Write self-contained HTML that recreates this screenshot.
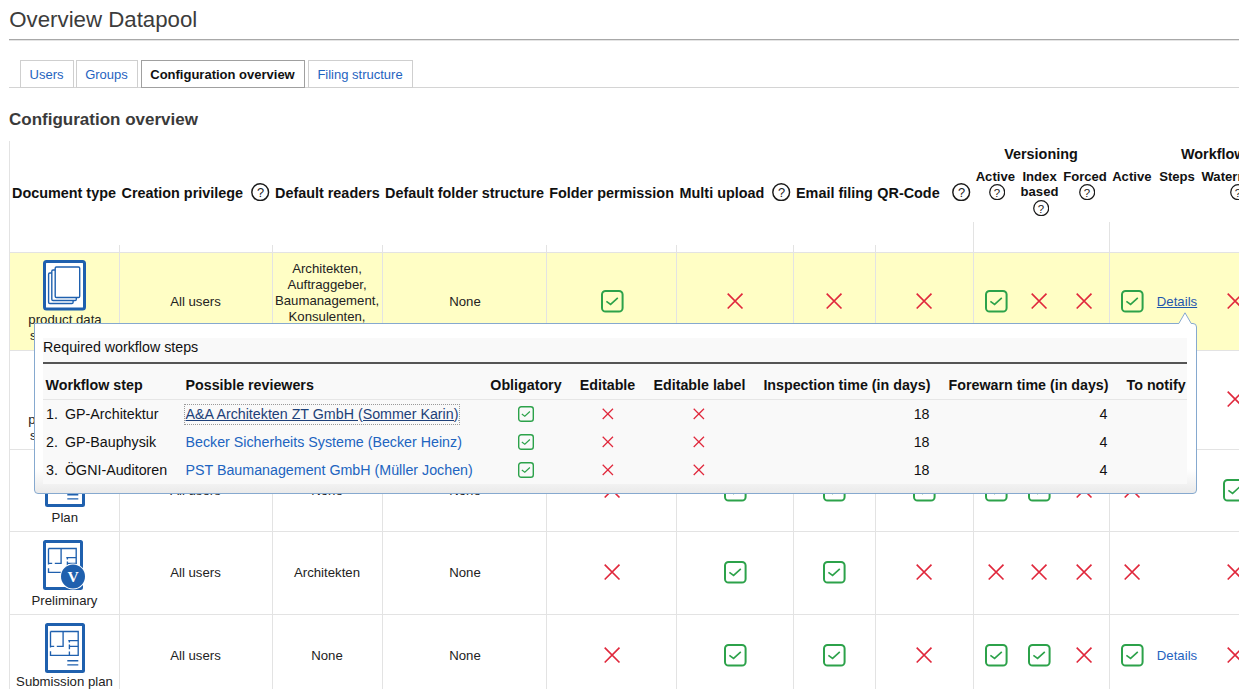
<!DOCTYPE html>
<html><head><meta charset="utf-8"><style>
html,body{margin:0;padding:0;background:#fff;}
body{width:1242px;height:689px;position:relative;overflow:hidden;font-family:"Liberation Sans", sans-serif;}
.t{position:absolute;white-space:nowrap;}
.r{position:absolute;}
#clip{position:absolute;left:0;top:0;width:1239px;height:689px;overflow:hidden;}
</style></head><body>
<div class="t" style="left:9.3px;top:6.50px;font-size:22.25px;line-height:26px;font-weight:normal;color:#3c3c3c;">Overview Datapool</div>
<div class="r" style="left:9px;top:39px;width:1230px;height:1px;background:#a8a8a8;"></div>
<div class="r" style="left:9px;top:40px;width:1230px;height:1px;background:#e4e4e4;"></div>
<div class="r" style="left:9px;top:87px;width:1230px;height:1px;background:#d4d4d4;"></div>
<div class="r" style="left:20px;top:60px;width:52px;height:26px;border:1px solid #cfcfcf;background:#fff"></div>
<div class="t" style="left:-103.5px;width:300px;text-align:center;top:67.00px;font-size:13px;line-height:15px;font-weight:normal;color:#1f63c0;">Users</div>
<div class="r" style="left:76px;top:60px;width:60px;height:26px;border:1px solid #cfcfcf;background:#fff"></div>
<div class="t" style="left:-43.5px;width:300px;text-align:center;top:67.00px;font-size:13px;line-height:15px;font-weight:normal;color:#1f63c0;">Groups</div>
<div class="r" style="left:141px;top:60px;width:162px;height:26px;border:1px solid #a0a0a0;background:#fff"></div>
<div class="t" style="left:72.5px;width:300px;text-align:center;top:67.00px;font-size:13px;line-height:15px;font-weight:bold;color:#111;">Configuration overview</div>
<div class="r" style="left:308px;top:60px;width:103px;height:26px;border:1px solid #cfcfcf;background:#fff"></div>
<div class="t" style="left:210.0px;width:300px;text-align:center;top:67.00px;font-size:13px;line-height:15px;font-weight:normal;color:#1f63c0;">Filing structure</div>
<div class="t" style="left:9px;top:109.80px;font-size:17px;line-height:20px;font-weight:bold;color:#3a3a3a;">Configuration overview</div>
<div id="clip">
<div class="r" style="left:10px;top:253px;width:1229px;height:97px;background:#fffec5;"></div>
<div class="r" style="left:10px;top:252px;width:1229px;height:1px;background:#e3e3e3;"></div>
<div class="r" style="left:10px;top:350px;width:1229px;height:1px;background:#e3e3e3;"></div>
<div class="r" style="left:10px;top:449px;width:1229px;height:1px;background:#e3e3e3;"></div>
<div class="r" style="left:10px;top:531px;width:1229px;height:1px;background:#e3e3e3;"></div>
<div class="r" style="left:10px;top:614px;width:1229px;height:1px;background:#e3e3e3;"></div>
<div class="r" style="left:9px;top:141px;width:1px;height:548px;background:#e3e3e3;"></div>
<div class="r" style="left:119px;top:245px;width:1px;height:444px;background:#e3e3e3;"></div>
<div class="r" style="left:272px;top:245px;width:1px;height:444px;background:#e3e3e3;"></div>
<div class="r" style="left:382px;top:245px;width:1px;height:444px;background:#e3e3e3;"></div>
<div class="r" style="left:546px;top:245px;width:1px;height:444px;background:#e3e3e3;"></div>
<div class="r" style="left:676px;top:245px;width:1px;height:444px;background:#e3e3e3;"></div>
<div class="r" style="left:793px;top:245px;width:1px;height:444px;background:#e3e3e3;"></div>
<div class="r" style="left:875px;top:245px;width:1px;height:444px;background:#e3e3e3;"></div>
<div class="r" style="left:973px;top:222px;width:1px;height:467px;background:#e3e3e3;"></div>
<div class="r" style="left:1109px;top:222px;width:1px;height:467px;background:#e3e3e3;"></div>
<div class="t" style="left:12px;top:184.90px;font-size:14.4px;line-height:17px;font-weight:bold;color:#111;">Document type</div>
<div class="t" style="left:121.5px;top:184.90px;font-size:14.4px;line-height:17px;font-weight:bold;color:#111;">Creation privilege</div>
<svg class="r" style="left:251.30px;top:182.80px" width="18.4" height="18.4" viewBox="0 0 18.4 18.4"><circle cx="9.2" cy="9.2" r="8.38" fill="none" stroke="#1a1a1a" stroke-width="1.45"/></svg>
<div class="t" style="left:250.5px;width:20px;text-align:center;top:185.44px;font-size:12.9px;line-height:15px;font-weight:normal;color:#222;">?</div>
<div class="t" style="left:275px;top:184.90px;font-size:14.4px;line-height:17px;font-weight:bold;color:#111;">Default readers</div>
<div class="t" style="left:385px;top:184.90px;font-size:14.4px;line-height:17px;font-weight:bold;color:#111;">Default folder structure</div>
<div class="t" style="left:549.2px;top:184.90px;font-size:14.4px;line-height:17px;font-weight:bold;color:#111;">Folder permission</div>
<div class="t" style="left:679.6px;top:184.90px;font-size:14.4px;line-height:17px;font-weight:bold;color:#111;">Multi upload</div>
<svg class="r" style="left:772.30px;top:182.80px" width="18.4" height="18.4" viewBox="0 0 18.4 18.4"><circle cx="9.2" cy="9.2" r="8.38" fill="none" stroke="#1a1a1a" stroke-width="1.45"/></svg>
<div class="t" style="left:771.5px;width:20px;text-align:center;top:185.44px;font-size:12.9px;line-height:15px;font-weight:normal;color:#222;">?</div>
<div class="t" style="left:796px;top:184.90px;font-size:14.4px;line-height:17px;font-weight:bold;color:#111;">Email filing</div>
<div class="t" style="left:877.3px;top:184.90px;font-size:14.4px;line-height:17px;font-weight:bold;color:#111;">QR-Code</div>
<svg class="r" style="left:952.30px;top:182.80px" width="18.4" height="18.4" viewBox="0 0 18.4 18.4"><circle cx="9.2" cy="9.2" r="8.38" fill="none" stroke="#1a1a1a" stroke-width="1.45"/></svg>
<div class="t" style="left:951.5px;width:20px;text-align:center;top:185.44px;font-size:12.9px;line-height:15px;font-weight:normal;color:#222;">?</div>
<div class="t" style="left:891.0px;width:300px;text-align:center;top:146.10px;font-size:14.4px;line-height:17px;font-weight:bold;color:#111;">Versioning</div>
<div class="t" style="left:1181px;top:146.10px;font-size:14.4px;line-height:17px;font-weight:bold;color:#111;">Workflow</div>
<div class="t" style="left:845.3px;width:300px;text-align:center;top:168.70px;font-size:13.1px;line-height:16px;font-weight:bold;color:#111;">Active</div>
<svg class="r" style="left:988.80px;top:183.80px" width="16.4" height="16.4" viewBox="0 0 16.4 16.4"><circle cx="8.2" cy="8.2" r="7.47" fill="none" stroke="#1a1a1a" stroke-width="1.25"/></svg>
<div class="t" style="left:987.0px;width:20px;text-align:center;top:185.93px;font-size:11.5px;line-height:14px;font-weight:normal;color:#222;">?</div>
<div class="t" style="left:889.5999999999999px;width:300px;text-align:center;top:168.70px;font-size:13.1px;line-height:16px;font-weight:bold;color:#111;">Index</div>
<div class="t" style="left:889.5px;width:300px;text-align:center;top:184.40px;font-size:13.1px;line-height:16px;font-weight:bold;color:#111;">based</div>
<svg class="r" style="left:1032.80px;top:199.80px" width="16.4" height="16.4" viewBox="0 0 16.4 16.4"><circle cx="8.2" cy="8.2" r="7.47" fill="none" stroke="#1a1a1a" stroke-width="1.25"/></svg>
<div class="t" style="left:1031.0px;width:20px;text-align:center;top:201.93px;font-size:11.5px;line-height:14px;font-weight:normal;color:#222;">?</div>
<div class="t" style="left:935.0px;width:300px;text-align:center;top:168.70px;font-size:13.1px;line-height:16px;font-weight:bold;color:#111;">Forced</div>
<svg class="r" style="left:1078.80px;top:183.80px" width="16.4" height="16.4" viewBox="0 0 16.4 16.4"><circle cx="8.2" cy="8.2" r="7.47" fill="none" stroke="#1a1a1a" stroke-width="1.25"/></svg>
<div class="t" style="left:1077.0px;width:20px;text-align:center;top:185.93px;font-size:11.5px;line-height:14px;font-weight:normal;color:#222;">?</div>
<div class="t" style="left:981.8px;width:300px;text-align:center;top:168.70px;font-size:13.1px;line-height:16px;font-weight:bold;color:#111;">Active</div>
<div class="t" style="left:1027.0px;width:300px;text-align:center;top:168.70px;font-size:13.1px;line-height:16px;font-weight:bold;color:#111;">Steps</div>
<div class="t" style="left:1201.5px;top:168.70px;font-size:13.1px;line-height:16px;font-weight:bold;color:#111;">Watermark</div>
<svg class="r" style="left:1229.80px;top:183.80px" width="16.4" height="16.4" viewBox="0 0 16.4 16.4"><circle cx="8.2" cy="8.2" r="7.47" fill="none" stroke="#1a1a1a" stroke-width="1.25"/></svg>
<div class="t" style="left:1228.0px;width:20px;text-align:center;top:185.93px;font-size:11.5px;line-height:14px;font-weight:normal;color:#222;">?</div>
<div class="t" style="left:45.5px;width:300px;text-align:center;top:294.00px;font-size:13.2px;line-height:16px;font-weight:normal;color:#222;">All users</div>
<div class="t" style="left:177.0px;width:300px;text-align:center;top:294.00px;font-size:13.2px;line-height:16px;font-weight:normal;color:#222;"></div>
<div class="t" style="left:315.0px;width:300px;text-align:center;top:294.00px;font-size:13.2px;line-height:16px;font-weight:normal;color:#222;">None</div>
<svg class="r" style="left:600.50px;top:290.00px;overflow:visible" width="22.60" height="22.60" viewBox="0 0 22.60 22.60"><rect x="1.00" y="1.00" width="20.60" height="20.60" rx="3.60" fill="none" stroke="#2ca24a" stroke-width="2.0"/><polyline points="5.40,11.30 9.60,14.40 16.80,7.80" fill="none" stroke="#2ca24a" stroke-width="1.60"/></svg>
<svg class="r" style="left:726.90px;top:293.20px;overflow:visible" width="16.2" height="16.2" viewBox="0 0 16.2 16.2"><path d="M0.7 0.7L15.5 15.5M15.5 0.7L0.7 15.5" stroke="#e0283c" stroke-width="1.65" fill="none"/></svg>
<svg class="r" style="left:825.90px;top:293.20px;overflow:visible" width="16.2" height="16.2" viewBox="0 0 16.2 16.2"><path d="M0.7 0.7L15.5 15.5M15.5 0.7L0.7 15.5" stroke="#e0283c" stroke-width="1.65" fill="none"/></svg>
<svg class="r" style="left:916.00px;top:293.20px;overflow:visible" width="16.2" height="16.2" viewBox="0 0 16.2 16.2"><path d="M0.7 0.7L15.5 15.5M15.5 0.7L0.7 15.5" stroke="#e0283c" stroke-width="1.65" fill="none"/></svg>
<svg class="r" style="left:984.70px;top:290.00px;overflow:visible" width="22.60" height="22.60" viewBox="0 0 22.60 22.60"><rect x="1.00" y="1.00" width="20.60" height="20.60" rx="3.60" fill="none" stroke="#2ca24a" stroke-width="2.0"/><polyline points="5.40,11.30 9.60,14.40 16.80,7.80" fill="none" stroke="#2ca24a" stroke-width="1.60"/></svg>
<svg class="r" style="left:1031.40px;top:293.20px;overflow:visible" width="16.2" height="16.2" viewBox="0 0 16.2 16.2"><path d="M0.7 0.7L15.5 15.5M15.5 0.7L0.7 15.5" stroke="#e0283c" stroke-width="1.65" fill="none"/></svg>
<svg class="r" style="left:1076.20px;top:293.20px;overflow:visible" width="16.2" height="16.2" viewBox="0 0 16.2 16.2"><path d="M0.7 0.7L15.5 15.5M15.5 0.7L0.7 15.5" stroke="#e0283c" stroke-width="1.65" fill="none"/></svg>
<svg class="r" style="left:1121.20px;top:290.00px;overflow:visible" width="22.60" height="22.60" viewBox="0 0 22.60 22.60"><rect x="1.00" y="1.00" width="20.60" height="20.60" rx="3.60" fill="none" stroke="#2ca24a" stroke-width="2.0"/><polyline points="5.40,11.30 9.60,14.40 16.80,7.80" fill="none" stroke="#2ca24a" stroke-width="1.60"/></svg>
<svg class="r" style="left:1226.60px;top:293.20px;overflow:visible" width="16.2" height="16.2" viewBox="0 0 16.2 16.2"><path d="M0.7 0.7L15.5 15.5M15.5 0.7L0.7 15.5" stroke="#e0283c" stroke-width="1.65" fill="none"/></svg>
<div class="t" style="left:177.0px;width:300px;text-align:center;top:261.20px;font-size:13.2px;line-height:16px;font-weight:normal;color:#222;">Architekten,</div>
<div class="t" style="left:177.0px;width:300px;text-align:center;top:277.20px;font-size:13.2px;line-height:16px;font-weight:normal;color:#222;">Auftraggeber,</div>
<div class="t" style="left:177.0px;width:300px;text-align:center;top:293.20px;font-size:13.2px;line-height:16px;font-weight:normal;color:#222;">Baumanagement,</div>
<div class="t" style="left:177.0px;width:300px;text-align:center;top:309.20px;font-size:13.2px;line-height:16px;font-weight:normal;color:#222;">Konsulenten,</div>
<div class="t" style="left:177.0px;width:300px;text-align:center;top:325.20px;font-size:13.2px;line-height:16px;font-weight:normal;color:#222;">Statiker</div>
<div class="t" style="left:1027.0px;width:300px;text-align:center;top:294.00px;font-size:13.2px;line-height:16px;font-weight:normal;color:#1f56ad;text-decoration:underline;">Details</div>
<div class="t" style="left:45.5px;width:300px;text-align:center;top:391.50px;font-size:13.2px;line-height:16px;font-weight:normal;color:#222;">All users</div>
<div class="t" style="left:177.0px;width:300px;text-align:center;top:391.50px;font-size:13.2px;line-height:16px;font-weight:normal;color:#222;">None</div>
<div class="t" style="left:315.0px;width:300px;text-align:center;top:391.50px;font-size:13.2px;line-height:16px;font-weight:normal;color:#222;">None</div>
<svg class="r" style="left:603.70px;top:391.40px;overflow:visible" width="16.2" height="16.2" viewBox="0 0 16.2 16.2"><path d="M0.7 0.7L15.5 15.5M15.5 0.7L0.7 15.5" stroke="#e0283c" stroke-width="1.65" fill="none"/></svg>
<svg class="r" style="left:726.90px;top:391.40px;overflow:visible" width="16.2" height="16.2" viewBox="0 0 16.2 16.2"><path d="M0.7 0.7L15.5 15.5M15.5 0.7L0.7 15.5" stroke="#e0283c" stroke-width="1.65" fill="none"/></svg>
<svg class="r" style="left:825.90px;top:391.40px;overflow:visible" width="16.2" height="16.2" viewBox="0 0 16.2 16.2"><path d="M0.7 0.7L15.5 15.5M15.5 0.7L0.7 15.5" stroke="#e0283c" stroke-width="1.65" fill="none"/></svg>
<svg class="r" style="left:916.00px;top:391.40px;overflow:visible" width="16.2" height="16.2" viewBox="0 0 16.2 16.2"><path d="M0.7 0.7L15.5 15.5M15.5 0.7L0.7 15.5" stroke="#e0283c" stroke-width="1.65" fill="none"/></svg>
<svg class="r" style="left:987.90px;top:391.40px;overflow:visible" width="16.2" height="16.2" viewBox="0 0 16.2 16.2"><path d="M0.7 0.7L15.5 15.5M15.5 0.7L0.7 15.5" stroke="#e0283c" stroke-width="1.65" fill="none"/></svg>
<svg class="r" style="left:1031.40px;top:391.40px;overflow:visible" width="16.2" height="16.2" viewBox="0 0 16.2 16.2"><path d="M0.7 0.7L15.5 15.5M15.5 0.7L0.7 15.5" stroke="#e0283c" stroke-width="1.65" fill="none"/></svg>
<svg class="r" style="left:1076.20px;top:391.40px;overflow:visible" width="16.2" height="16.2" viewBox="0 0 16.2 16.2"><path d="M0.7 0.7L15.5 15.5M15.5 0.7L0.7 15.5" stroke="#e0283c" stroke-width="1.65" fill="none"/></svg>
<svg class="r" style="left:1124.40px;top:391.40px;overflow:visible" width="16.2" height="16.2" viewBox="0 0 16.2 16.2"><path d="M0.7 0.7L15.5 15.5M15.5 0.7L0.7 15.5" stroke="#e0283c" stroke-width="1.65" fill="none"/></svg>
<svg class="r" style="left:1226.60px;top:391.40px;overflow:visible" width="16.2" height="16.2" viewBox="0 0 16.2 16.2"><path d="M0.7 0.7L15.5 15.5M15.5 0.7L0.7 15.5" stroke="#e0283c" stroke-width="1.65" fill="none"/></svg>
<div class="t" style="left:45.5px;width:300px;text-align:center;top:482.70px;font-size:13.2px;line-height:16px;font-weight:normal;color:#222;">All users</div>
<div class="t" style="left:177.0px;width:300px;text-align:center;top:482.70px;font-size:13.2px;line-height:16px;font-weight:normal;color:#222;">None</div>
<div class="t" style="left:315.0px;width:300px;text-align:center;top:482.70px;font-size:13.2px;line-height:16px;font-weight:normal;color:#222;">None</div>
<svg class="r" style="left:603.70px;top:481.70px;overflow:visible" width="16.2" height="16.2" viewBox="0 0 16.2 16.2"><path d="M0.7 0.7L15.5 15.5M15.5 0.7L0.7 15.5" stroke="#e0283c" stroke-width="1.65" fill="none"/></svg>
<svg class="r" style="left:723.70px;top:478.50px;overflow:visible" width="22.60" height="22.60" viewBox="0 0 22.60 22.60"><rect x="1.00" y="1.00" width="20.60" height="20.60" rx="3.60" fill="none" stroke="#2ca24a" stroke-width="2.0"/><polyline points="5.40,11.30 9.60,14.40 16.80,7.80" fill="none" stroke="#2ca24a" stroke-width="1.60"/></svg>
<svg class="r" style="left:822.70px;top:478.50px;overflow:visible" width="22.60" height="22.60" viewBox="0 0 22.60 22.60"><rect x="1.00" y="1.00" width="20.60" height="20.60" rx="3.60" fill="none" stroke="#2ca24a" stroke-width="2.0"/><polyline points="5.40,11.30 9.60,14.40 16.80,7.80" fill="none" stroke="#2ca24a" stroke-width="1.60"/></svg>
<svg class="r" style="left:912.80px;top:478.50px;overflow:visible" width="22.60" height="22.60" viewBox="0 0 22.60 22.60"><rect x="1.00" y="1.00" width="20.60" height="20.60" rx="3.60" fill="none" stroke="#2ca24a" stroke-width="2.0"/><polyline points="5.40,11.30 9.60,14.40 16.80,7.80" fill="none" stroke="#2ca24a" stroke-width="1.60"/></svg>
<svg class="r" style="left:984.70px;top:478.50px;overflow:visible" width="22.60" height="22.60" viewBox="0 0 22.60 22.60"><rect x="1.00" y="1.00" width="20.60" height="20.60" rx="3.60" fill="none" stroke="#2ca24a" stroke-width="2.0"/><polyline points="5.40,11.30 9.60,14.40 16.80,7.80" fill="none" stroke="#2ca24a" stroke-width="1.60"/></svg>
<svg class="r" style="left:1028.20px;top:478.50px;overflow:visible" width="22.60" height="22.60" viewBox="0 0 22.60 22.60"><rect x="1.00" y="1.00" width="20.60" height="20.60" rx="3.60" fill="none" stroke="#2ca24a" stroke-width="2.0"/><polyline points="5.40,11.30 9.60,14.40 16.80,7.80" fill="none" stroke="#2ca24a" stroke-width="1.60"/></svg>
<svg class="r" style="left:1076.20px;top:481.70px;overflow:visible" width="16.2" height="16.2" viewBox="0 0 16.2 16.2"><path d="M0.7 0.7L15.5 15.5M15.5 0.7L0.7 15.5" stroke="#e0283c" stroke-width="1.65" fill="none"/></svg>
<svg class="r" style="left:1124.40px;top:481.70px;overflow:visible" width="16.2" height="16.2" viewBox="0 0 16.2 16.2"><path d="M0.7 0.7L15.5 15.5M15.5 0.7L0.7 15.5" stroke="#e0283c" stroke-width="1.65" fill="none"/></svg>
<svg class="r" style="left:1223.40px;top:478.50px;overflow:visible" width="22.60" height="22.60" viewBox="0 0 22.60 22.60"><rect x="1.00" y="1.00" width="20.60" height="20.60" rx="3.60" fill="none" stroke="#2ca24a" stroke-width="2.0"/><polyline points="5.40,11.30 9.60,14.40 16.80,7.80" fill="none" stroke="#2ca24a" stroke-width="1.60"/></svg>
<div class="t" style="left:45.5px;width:300px;text-align:center;top:565.00px;font-size:13.2px;line-height:16px;font-weight:normal;color:#222;">All users</div>
<div class="t" style="left:177.0px;width:300px;text-align:center;top:565.00px;font-size:13.2px;line-height:16px;font-weight:normal;color:#222;">Architekten</div>
<div class="t" style="left:315.0px;width:300px;text-align:center;top:565.00px;font-size:13.2px;line-height:16px;font-weight:normal;color:#222;">None</div>
<svg class="r" style="left:603.70px;top:564.00px;overflow:visible" width="16.2" height="16.2" viewBox="0 0 16.2 16.2"><path d="M0.7 0.7L15.5 15.5M15.5 0.7L0.7 15.5" stroke="#e0283c" stroke-width="1.65" fill="none"/></svg>
<svg class="r" style="left:723.70px;top:560.80px;overflow:visible" width="22.60" height="22.60" viewBox="0 0 22.60 22.60"><rect x="1.00" y="1.00" width="20.60" height="20.60" rx="3.60" fill="none" stroke="#2ca24a" stroke-width="2.0"/><polyline points="5.40,11.30 9.60,14.40 16.80,7.80" fill="none" stroke="#2ca24a" stroke-width="1.60"/></svg>
<svg class="r" style="left:822.70px;top:560.80px;overflow:visible" width="22.60" height="22.60" viewBox="0 0 22.60 22.60"><rect x="1.00" y="1.00" width="20.60" height="20.60" rx="3.60" fill="none" stroke="#2ca24a" stroke-width="2.0"/><polyline points="5.40,11.30 9.60,14.40 16.80,7.80" fill="none" stroke="#2ca24a" stroke-width="1.60"/></svg>
<svg class="r" style="left:916.00px;top:564.00px;overflow:visible" width="16.2" height="16.2" viewBox="0 0 16.2 16.2"><path d="M0.7 0.7L15.5 15.5M15.5 0.7L0.7 15.5" stroke="#e0283c" stroke-width="1.65" fill="none"/></svg>
<svg class="r" style="left:987.90px;top:564.00px;overflow:visible" width="16.2" height="16.2" viewBox="0 0 16.2 16.2"><path d="M0.7 0.7L15.5 15.5M15.5 0.7L0.7 15.5" stroke="#e0283c" stroke-width="1.65" fill="none"/></svg>
<svg class="r" style="left:1031.40px;top:564.00px;overflow:visible" width="16.2" height="16.2" viewBox="0 0 16.2 16.2"><path d="M0.7 0.7L15.5 15.5M15.5 0.7L0.7 15.5" stroke="#e0283c" stroke-width="1.65" fill="none"/></svg>
<svg class="r" style="left:1076.20px;top:564.00px;overflow:visible" width="16.2" height="16.2" viewBox="0 0 16.2 16.2"><path d="M0.7 0.7L15.5 15.5M15.5 0.7L0.7 15.5" stroke="#e0283c" stroke-width="1.65" fill="none"/></svg>
<svg class="r" style="left:1124.40px;top:564.00px;overflow:visible" width="16.2" height="16.2" viewBox="0 0 16.2 16.2"><path d="M0.7 0.7L15.5 15.5M15.5 0.7L0.7 15.5" stroke="#e0283c" stroke-width="1.65" fill="none"/></svg>
<svg class="r" style="left:1226.60px;top:564.00px;overflow:visible" width="16.2" height="16.2" viewBox="0 0 16.2 16.2"><path d="M0.7 0.7L15.5 15.5M15.5 0.7L0.7 15.5" stroke="#e0283c" stroke-width="1.65" fill="none"/></svg>
<div class="t" style="left:45.5px;width:300px;text-align:center;top:647.70px;font-size:13.2px;line-height:16px;font-weight:normal;color:#222;">All users</div>
<div class="t" style="left:177.0px;width:300px;text-align:center;top:647.70px;font-size:13.2px;line-height:16px;font-weight:normal;color:#222;">None</div>
<div class="t" style="left:315.0px;width:300px;text-align:center;top:647.70px;font-size:13.2px;line-height:16px;font-weight:normal;color:#222;">None</div>
<svg class="r" style="left:603.70px;top:646.95px;overflow:visible" width="16.2" height="16.2" viewBox="0 0 16.2 16.2"><path d="M0.7 0.7L15.5 15.5M15.5 0.7L0.7 15.5" stroke="#e0283c" stroke-width="1.65" fill="none"/></svg>
<svg class="r" style="left:723.70px;top:643.75px;overflow:visible" width="22.60" height="22.60" viewBox="0 0 22.60 22.60"><rect x="1.00" y="1.00" width="20.60" height="20.60" rx="3.60" fill="none" stroke="#2ca24a" stroke-width="2.0"/><polyline points="5.40,11.30 9.60,14.40 16.80,7.80" fill="none" stroke="#2ca24a" stroke-width="1.60"/></svg>
<svg class="r" style="left:822.70px;top:643.75px;overflow:visible" width="22.60" height="22.60" viewBox="0 0 22.60 22.60"><rect x="1.00" y="1.00" width="20.60" height="20.60" rx="3.60" fill="none" stroke="#2ca24a" stroke-width="2.0"/><polyline points="5.40,11.30 9.60,14.40 16.80,7.80" fill="none" stroke="#2ca24a" stroke-width="1.60"/></svg>
<svg class="r" style="left:916.00px;top:646.95px;overflow:visible" width="16.2" height="16.2" viewBox="0 0 16.2 16.2"><path d="M0.7 0.7L15.5 15.5M15.5 0.7L0.7 15.5" stroke="#e0283c" stroke-width="1.65" fill="none"/></svg>
<svg class="r" style="left:984.70px;top:643.75px;overflow:visible" width="22.60" height="22.60" viewBox="0 0 22.60 22.60"><rect x="1.00" y="1.00" width="20.60" height="20.60" rx="3.60" fill="none" stroke="#2ca24a" stroke-width="2.0"/><polyline points="5.40,11.30 9.60,14.40 16.80,7.80" fill="none" stroke="#2ca24a" stroke-width="1.60"/></svg>
<svg class="r" style="left:1028.20px;top:643.75px;overflow:visible" width="22.60" height="22.60" viewBox="0 0 22.60 22.60"><rect x="1.00" y="1.00" width="20.60" height="20.60" rx="3.60" fill="none" stroke="#2ca24a" stroke-width="2.0"/><polyline points="5.40,11.30 9.60,14.40 16.80,7.80" fill="none" stroke="#2ca24a" stroke-width="1.60"/></svg>
<svg class="r" style="left:1076.20px;top:646.95px;overflow:visible" width="16.2" height="16.2" viewBox="0 0 16.2 16.2"><path d="M0.7 0.7L15.5 15.5M15.5 0.7L0.7 15.5" stroke="#e0283c" stroke-width="1.65" fill="none"/></svg>
<svg class="r" style="left:1121.20px;top:643.75px;overflow:visible" width="22.60" height="22.60" viewBox="0 0 22.60 22.60"><rect x="1.00" y="1.00" width="20.60" height="20.60" rx="3.60" fill="none" stroke="#2ca24a" stroke-width="2.0"/><polyline points="5.40,11.30 9.60,14.40 16.80,7.80" fill="none" stroke="#2ca24a" stroke-width="1.60"/></svg>
<svg class="r" style="left:1226.60px;top:646.95px;overflow:visible" width="16.2" height="16.2" viewBox="0 0 16.2 16.2"><path d="M0.7 0.7L15.5 15.5M15.5 0.7L0.7 15.5" stroke="#e0283c" stroke-width="1.65" fill="none"/></svg>
<div class="t" style="left:1027.0px;width:300px;text-align:center;top:647.70px;font-size:13.2px;line-height:16px;font-weight:normal;color:#1f63c0;">Details</div>
<svg class="r" style="left:43px;top:260px" width="44" height="51" viewBox="0 0 44 51"><rect x="1.5" y="1.5" width="40" height="47.5" rx="2" fill="#fff" stroke="#1f60ae" stroke-width="3"/><rect x="5.6" y="13" width="24.5" height="30.5" rx="1.2" fill="#fff" stroke="#1f60ae" stroke-width="1.4"/><rect x="8.8" y="10" width="24.5" height="30.5" rx="1.2" fill="#fff" stroke="#1f60ae" stroke-width="1.4"/><rect x="12.2" y="7" width="24.5" height="30.5" rx="1.2" fill="#fff" stroke="#1f60ae" stroke-width="1.4"/></svg>
<div class="t" style="left:-85.0px;width:300px;text-align:center;top:312.30px;font-size:13.2px;line-height:16px;font-weight:normal;color:#222;">product data</div>
<div class="t" style="left:-83.8px;width:300px;text-align:center;top:328.30px;font-size:13.2px;line-height:16px;font-weight:normal;color:#222;">specification</div>
<svg class="r" style="left:43px;top:362px" width="44" height="51" viewBox="0 0 44 51"><rect x="1.5" y="1.5" width="40" height="47.5" rx="2" fill="#fff" stroke="#1f60ae" stroke-width="3"/><rect x="5.6" y="13" width="24.5" height="30.5" rx="1.2" fill="#fff" stroke="#1f60ae" stroke-width="1.4"/><rect x="8.8" y="10" width="24.5" height="30.5" rx="1.2" fill="#fff" stroke="#1f60ae" stroke-width="1.4"/><rect x="12.2" y="7" width="24.5" height="30.5" rx="1.2" fill="#fff" stroke="#1f60ae" stroke-width="1.4"/></svg>
<div class="t" style="left:-85.0px;width:300px;text-align:center;top:411.50px;font-size:13.2px;line-height:16px;font-weight:normal;color:#222;">product data</div>
<div class="t" style="left:-83.8px;width:300px;text-align:center;top:427.70px;font-size:13.2px;line-height:16px;font-weight:normal;color:#222;">specification</div>
<svg class="r" style="left:44.6px;top:457.3px;overflow:visible" width="41" height="51" viewBox="0 0 41 51"><rect x="1.5" y="1.5" width="37" height="47" rx="1" fill="#fff" stroke="#1f60ae" stroke-width="3"/><g fill="none" stroke="#1f60ae" stroke-width="1.35"><path d="M5.5 8.5H33.2V32.4H5.5V28.2M5.5 24.6V8.5"/><path d="M18.1 8.5V23.3H11.8M9.2 23.3H5.5"/><path d="M23.3 17.6H33.2M24.4 17.6V19.6M24.4 21.6V26.2M24.4 28.4V32.4M24.4 23.3H33.2"/></g><path d="M22.3 37.8H33.3M22.3 41.9H33.3" stroke="#1f60ae" stroke-width="1.4"/></svg>
<div class="t" style="left:-85.2px;width:300px;text-align:center;top:510.00px;font-size:13.2px;line-height:16px;font-weight:normal;color:#222;">Plan</div>
<svg class="r" style="left:43px;top:540px;overflow:visible" width="41" height="51" viewBox="0 0 41 51"><rect x="1.5" y="1.5" width="37" height="47" rx="1" fill="#fff" stroke="#1f60ae" stroke-width="3"/><g fill="none" stroke="#1f60ae" stroke-width="1.35"><path d="M5.5 8.5H33.2V32.4H5.5V28.2M5.5 24.6V8.5"/><path d="M18.1 8.5V23.3H11.8M9.2 23.3H5.5"/><path d="M23.3 17.6H33.2M24.4 17.6V19.6M24.4 21.6V26.2M24.4 28.4V32.4M24.4 23.3H33.2"/></g><circle cx="30" cy="36.6" r="13" fill="#fff"/><circle cx="30" cy="36.6" r="12" fill="#1f60ae"/><text x="30.2" y="42.2" text-anchor="middle" font-family="Liberation Serif" font-size="15.5" font-weight="bold" fill="#fff">V</text></svg>
<div class="t" style="left:-85.5px;width:300px;text-align:center;top:592.70px;font-size:13.2px;line-height:16px;font-weight:normal;color:#222;">Preliminary</div>
<svg class="r" style="left:44.5px;top:622.5px;overflow:visible" width="41" height="51" viewBox="0 0 41 51"><rect x="1.5" y="1.5" width="37" height="47" rx="1" fill="#fff" stroke="#1f60ae" stroke-width="3"/><g fill="none" stroke="#1f60ae" stroke-width="1.35"><path d="M5.5 8.5H33.2V32.4H5.5V28.2M5.5 24.6V8.5"/><path d="M18.1 8.5V23.3H11.8M9.2 23.3H5.5"/><path d="M23.3 17.6H33.2M24.4 17.6V19.6M24.4 21.6V26.2M24.4 28.4V32.4M24.4 23.3H33.2"/></g><path d="M22.3 37.8H33.3M22.3 41.9H33.3" stroke="#1f60ae" stroke-width="1.4"/></svg>
<div class="t" style="left:-85.5px;width:300px;text-align:center;top:674.10px;font-size:13.2px;line-height:16px;font-weight:normal;color:#222;">Submission plan</div>
</div>
<div class="r" style="left:34px;top:323px;width:1161px;height:169px;border:1px solid #86a9cf;border-radius:0 4px 4px 4px;background:linear-gradient(#fff 0,#fff 145px,#e9e9e9 170px);box-shadow:none"></div>
<svg class="r" style="left:1176px;top:311px" width="20" height="14" viewBox="0 0 20 14"><path d="M2.5 13L9 1.8L15.5 13" fill="#fff" stroke="#86a9cf" stroke-width="1"/><rect x="3" y="12.5" width="12" height="2" fill="#fff"/></svg>
<div class="r" style="left:43px;top:338px;width:1144px;height:145.5px;background:#f9f9f9;"></div>
<div class="t" style="left:43px;top:338.50px;font-size:14.25px;line-height:17px;font-weight:normal;color:#111;">Required workflow steps</div>
<div class="r" style="left:43px;top:362px;width:1144px;height:2px;background:#555;"></div>
<div class="r" style="left:43px;top:399px;width:1144px;height:1px;background:#e6e6e6;"></div>
<div class="t" style="left:45.5px;top:377.00px;font-size:14.25px;line-height:17px;font-weight:bold;color:#111;">Workflow step</div>
<div class="t" style="left:185.5px;top:377.00px;font-size:14.25px;line-height:17px;font-weight:bold;color:#111;">Possible reviewers</div>
<div class="t" style="left:490.3px;top:377.00px;font-size:14.25px;line-height:17px;font-weight:bold;color:#111;">Obligatory</div>
<div class="t" style="left:579.8px;top:377.00px;font-size:14.25px;line-height:17px;font-weight:bold;color:#111;">Editable</div>
<div class="t" style="left:653.5px;top:377.00px;font-size:14.25px;line-height:17px;font-weight:bold;color:#111;">Editable label</div>
<div class="t" style="left:763.4px;top:377.00px;font-size:14.25px;line-height:17px;font-weight:bold;color:#111;">Inspection time (in days)</div>
<div class="t" style="left:948.6px;top:377.00px;font-size:14.25px;line-height:17px;font-weight:bold;color:#111;">Forewarn time (in days)</div>
<div class="t" style="left:1126.6px;top:377.00px;font-size:14.25px;line-height:17px;font-weight:bold;color:#111;">To notify</div>
<div class="t" style="left:46px;top:405.50px;font-size:14.25px;line-height:17px;font-weight:normal;color:#111;">1.</div>
<div class="t" style="left:65px;top:405.50px;font-size:14.25px;line-height:17px;font-weight:normal;color:#111;">GP-Architektur</div>
<div class="t" style="left:185.5px;top:405.50px;font-size:14.25px;line-height:17px;font-weight:normal;color:#1d3f78;text-decoration:underline;outline:1px dotted #999;outline-offset:1px;">A&amp;A Architekten ZT GmbH (Sommer Karin)</div>
<svg class="r" style="left:518.00px;top:406.20px;overflow:visible" width="16.00" height="16.00" viewBox="0 0 16.00 16.00"><rect x="0.70" y="0.70" width="14.60" height="14.60" rx="2.55" fill="none" stroke="#2ca24a" stroke-width="1.4"/><polyline points="3.82,8.00 6.80,10.19 11.89,5.52" fill="none" stroke="#2ca24a" stroke-width="1.13"/></svg>
<svg class="r" style="left:601.55px;top:408.35px;overflow:visible" width="11.7" height="11.7" viewBox="0 0 11.7 11.7"><path d="M0.7 0.7L11.0 11.0M11.0 0.7L0.7 11.0" stroke="#e0283c" stroke-width="1.25" fill="none"/></svg>
<svg class="r" style="left:692.65px;top:408.35px;overflow:visible" width="11.7" height="11.7" viewBox="0 0 11.7 11.7"><path d="M0.7 0.7L11.0 11.0M11.0 0.7L0.7 11.0" stroke="#e0283c" stroke-width="1.25" fill="none"/></svg>
<div class="t" style="left:869.5px;width:60px;text-align:right;top:405.50px;font-size:14.25px;line-height:17px;font-weight:normal;color:#111;">18</div>
<div class="t" style="left:1047.5px;width:60px;text-align:right;top:405.50px;font-size:14.25px;line-height:17px;font-weight:normal;color:#111;">4</div>
<div class="t" style="left:46px;top:433.50px;font-size:14.25px;line-height:17px;font-weight:normal;color:#111;">2.</div>
<div class="t" style="left:65px;top:433.50px;font-size:14.25px;line-height:17px;font-weight:normal;color:#111;">GP-Bauphysik</div>
<div class="t" style="left:185.5px;top:433.50px;font-size:14.25px;line-height:17px;font-weight:normal;color:#2164c0;">Becker Sicherheits Systeme (Becker Heinz)</div>
<svg class="r" style="left:518.00px;top:434.20px;overflow:visible" width="16.00" height="16.00" viewBox="0 0 16.00 16.00"><rect x="0.70" y="0.70" width="14.60" height="14.60" rx="2.55" fill="none" stroke="#2ca24a" stroke-width="1.4"/><polyline points="3.82,8.00 6.80,10.19 11.89,5.52" fill="none" stroke="#2ca24a" stroke-width="1.13"/></svg>
<svg class="r" style="left:601.55px;top:436.35px;overflow:visible" width="11.7" height="11.7" viewBox="0 0 11.7 11.7"><path d="M0.7 0.7L11.0 11.0M11.0 0.7L0.7 11.0" stroke="#e0283c" stroke-width="1.25" fill="none"/></svg>
<svg class="r" style="left:692.65px;top:436.35px;overflow:visible" width="11.7" height="11.7" viewBox="0 0 11.7 11.7"><path d="M0.7 0.7L11.0 11.0M11.0 0.7L0.7 11.0" stroke="#e0283c" stroke-width="1.25" fill="none"/></svg>
<div class="t" style="left:869.5px;width:60px;text-align:right;top:433.50px;font-size:14.25px;line-height:17px;font-weight:normal;color:#111;">18</div>
<div class="t" style="left:1047.5px;width:60px;text-align:right;top:433.50px;font-size:14.25px;line-height:17px;font-weight:normal;color:#111;">4</div>
<div class="t" style="left:46px;top:461.50px;font-size:14.25px;line-height:17px;font-weight:normal;color:#111;">3.</div>
<div class="t" style="left:65px;top:461.50px;font-size:14.25px;line-height:17px;font-weight:normal;color:#111;">ÖGNI-Auditoren</div>
<div class="t" style="left:185.5px;top:461.50px;font-size:14.25px;line-height:17px;font-weight:normal;color:#2164c0;">PST Baumanagement GmbH (Müller Jochen)</div>
<svg class="r" style="left:518.00px;top:462.20px;overflow:visible" width="16.00" height="16.00" viewBox="0 0 16.00 16.00"><rect x="0.70" y="0.70" width="14.60" height="14.60" rx="2.55" fill="none" stroke="#2ca24a" stroke-width="1.4"/><polyline points="3.82,8.00 6.80,10.19 11.89,5.52" fill="none" stroke="#2ca24a" stroke-width="1.13"/></svg>
<svg class="r" style="left:601.55px;top:464.35px;overflow:visible" width="11.7" height="11.7" viewBox="0 0 11.7 11.7"><path d="M0.7 0.7L11.0 11.0M11.0 0.7L0.7 11.0" stroke="#e0283c" stroke-width="1.25" fill="none"/></svg>
<svg class="r" style="left:692.65px;top:464.35px;overflow:visible" width="11.7" height="11.7" viewBox="0 0 11.7 11.7"><path d="M0.7 0.7L11.0 11.0M11.0 0.7L0.7 11.0" stroke="#e0283c" stroke-width="1.25" fill="none"/></svg>
<div class="t" style="left:869.5px;width:60px;text-align:right;top:461.50px;font-size:14.25px;line-height:17px;font-weight:normal;color:#111;">18</div>
<div class="t" style="left:1047.5px;width:60px;text-align:right;top:461.50px;font-size:14.25px;line-height:17px;font-weight:normal;color:#111;">4</div>
</body></html>
